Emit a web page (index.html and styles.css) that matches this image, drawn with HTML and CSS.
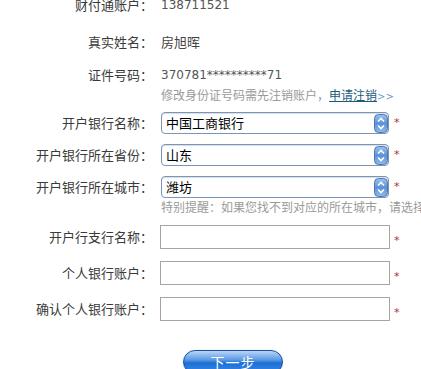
FILE: index.html
```html
<!DOCTYPE html>
<html lang="zh-CN">
<head>
<meta charset="utf-8">
<title>开户银行信息</title>
<link rel="stylesheet" href="styles.css">
</head>
<body>
<div class="form">
  <div class="row r1"><span class="label">财付通账户：</span><span class="value num">138711521</span></div>
  <div class="row r2"><span class="label">真实姓名：</span><span class="value">房旭晖</span></div>
  <div class="row r3"><span class="label">证件号码：</span><span class="value num">370781**********71</span></div>
  <div class="hint h1">修改身份证号码需先注销账户，<a class="link" href="#">申请注销</a><span class="more">&gt;&gt;</span></div>

  <div class="row sel first"><span class="label">开户银行名称：</span>
    <div class="select"><span class="stext">中国工商银行</span><span class="arrow"><svg width="14" height="19" viewBox="0 0 14 19"><defs><linearGradient id="g1" x1="0" y1="0" x2="0" y2="1"><stop offset="0" stop-color="#9cc3ef"/><stop offset="0.5" stop-color="#5b93d8"/><stop offset="1" stop-color="#8fb9ea"/></linearGradient></defs><rect x="0.5" y="0.5" width="13" height="18" rx="4" fill="url(#g1)" stroke="#5179ad"/><path d="M4 7.5 L7 4.5 L10 7.5" fill="none" stroke="#fff" stroke-width="1.6"/><path d="M4 11.5 L7 14.5 L10 11.5" fill="none" stroke="#fff" stroke-width="1.6"/></svg></span></div>
    <span class="star">*</span></div>
  <div class="row sel"><span class="label">开户银行所在省份：</span>
    <div class="select"><span class="stext">山东</span><span class="arrow"><svg width="14" height="19" viewBox="0 0 14 19"><rect x="0.5" y="0.5" width="13" height="18" rx="4" fill="url(#g1)" stroke="#5179ad"/><path d="M4 7.5 L7 4.5 L10 7.5" fill="none" stroke="#fff" stroke-width="1.6"/><path d="M4 11.5 L7 14.5 L10 11.5" fill="none" stroke="#fff" stroke-width="1.6"/></svg></span></div>
    <span class="star">*</span></div>
  <div class="row sel"><span class="label">开户银行所在城市：</span>
    <div class="select"><span class="stext">潍坊</span><span class="arrow"><svg width="14" height="19" viewBox="0 0 14 19"><rect x="0.5" y="0.5" width="13" height="18" rx="4" fill="url(#g1)" stroke="#5179ad"/><path d="M4 7.5 L7 4.5 L10 7.5" fill="none" stroke="#fff" stroke-width="1.6"/><path d="M4 11.5 L7 14.5 L10 11.5" fill="none" stroke="#fff" stroke-width="1.6"/></svg></span></div>
    <span class="star">*</span></div>
  <div class="hint h2">特别提醒：如果您找不到对应的所在城市，请选择</div>

  <div class="row inp first"><span class="label">开户行支行名称：</span><span class="input"></span><span class="star">*</span></div>
  <div class="row inp"><span class="label">个人银行账户：</span><span class="input"></span><span class="star">*</span></div>
  <div class="row inp"><span class="label">确认个人银行账户：</span><span class="input"></span><span class="star">*</span></div>

  <div class="actions"><span class="btn">下一步</span></div>
</div>
</body>
</html>
```
FILE: styles.css
```css
html, body {
  margin: 0;
  padding: 0;
  background: #fff;
  overflow: hidden;
}
body {
  font-family: "Noto Sans CJK SC", "DejaVu Sans", sans-serif;
  font-size: 13px;
  color: #333;
}
.form {
  display: flex;
  flex-direction: column;
  margin-top: -5px;
}
.row {
  display: flex;
  align-items: center;
  line-height: 20px;
  height: 20px;
}
.label {
  width: 153px;
  text-align: right;
  color: #3a3a3a;
  flex: none;
}
.value {
  margin-left: 8px;
  color: #444;
}
.num {
  font-family: "DejaVu Sans", sans-serif;
  font-size: 12px;
  color: #555;
}
.r2 { margin-top: 17px; }
.r3 { margin-top: 13px; }
.hint {
  margin-left: 161px;
  font-size: 12px;
  color: #9a9a9a;
  white-space: nowrap;
  line-height: 18px;
}
.h1 { margin-top: 1px; }
.link {
  color: #1d5a7a;
  text-decoration: underline;
}
.more {
  color: #6a9ccc;
  font-family: "DejaVu Sans", sans-serif;
  font-size: 10px;
}
.sel {
  height: 22px;
  margin-top: 10px;
}
.sel.first { margin-top: 6px; }
.select {
  margin-left: 8px;
  width: 226px;
  height: 20px;
  border: 1px solid #7a95b5;
  border-radius: 4px;
  display: flex;
  align-items: center;
  justify-content: space-between;
  background: #fff;
  box-shadow: inset 0 1px 1px #d6dde6;
}
.stext {
  margin-left: 4px;
  color: #000;
  line-height: 20px;
}
.arrow {
  display: flex;
}
.arrow svg { display: block; }
.star {
  margin-left: 5px;
  color: #a33;
  font-size: 11px;
  font-family: "DejaVu Sans", sans-serif;
}
.h2 {
  line-height: 16px;
  margin-top: 1px;
}
.inp {
  height: 24px;
  margin-top: 12px;
}
.inp.first { margin-top: 10px; }
.input {
  margin-left: 7px;
  width: 228px;
  height: 22px;
  border: 1px solid #a5a5a5;
  background: #fff;
  flex: none;
}
.inp .star {
  margin-left: 4px;
  align-self: flex-end;
  line-height: 16px;
}
.actions {
  margin-top: 29px;
  padding-left: 183px;
}
.btn {
  display: flex;
  align-items: center;
  justify-content: center;
  width: 98px;
  height: 22px;
  border: 1px solid #1a4f9a;
  border-radius: 12px;
  background: linear-gradient(to bottom, #b9d6f7 0%, #5c9ae4 40%, #1a6fd6 55%, #3f8ae6 100%);
  color: #fff;
  font-size: 14px;
  line-height: 18px;
  letter-spacing: 1px;
  box-shadow: 0 0 2px #dbe6f3;
}
```
